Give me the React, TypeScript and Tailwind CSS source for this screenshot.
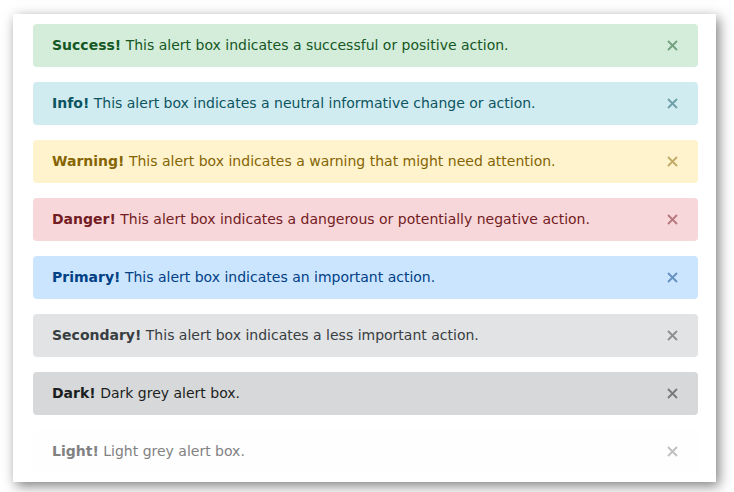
const alerts = [
  { label: 'Success!', text: 'This alert box indicates a successful or positive action.', bg: 'bg-[#d4edda]', fg: 'text-[#155724]' },
  { label: 'Info!', text: 'This alert box indicates a neutral informative change or action.', bg: 'bg-[#d1ecf1]', fg: 'text-[#0c5460]' },
  { label: 'Warning!', text: 'This alert box indicates a warning that might need attention.', bg: 'bg-[#fff3cd]', fg: 'text-[#856404]' },
  { label: 'Danger!', text: 'This alert box indicates a dangerous or potentially negative action.', bg: 'bg-[#f8d7da]', fg: 'text-[#721c24]' },
  { label: 'Primary!', text: 'This alert box indicates an important action.', bg: 'bg-[#cce5ff]', fg: 'text-[#004085]' },
  { label: 'Secondary!', text: 'This alert box indicates a less important action.', bg: 'bg-[#e2e3e5]', fg: 'text-[#383d41]' },
  { label: 'Dark!', text: 'Dark grey alert box.', bg: 'bg-[#d6d8d9]', fg: 'text-[#1b1e21]' },
  { label: 'Light!', text: 'Light grey alert box.', bg: 'bg-[#fefefe]', fg: 'text-[#818182]' },
]

export default function App() {
  return (
    <div className="min-h-screen bg-white pt-[14px] pl-[13px] font-['DejaVu_Sans',Verdana,sans-serif]">
      <div className="w-[703px] h-[468px] bg-white shadow-[3px_4px_12px_rgba(0,0,0,0.5)] pt-[10px] pl-[20px]">
        <div className="flex w-[665px] flex-col gap-[15px]">
          {alerts.map((a) => (
            <div key={a.label} className={`flex h-[43px] items-center justify-between rounded-[4px] pl-[19px] pr-[20px] text-[14px] ${a.bg} ${a.fg}`}>
              <p>
                <strong className="font-bold">{a.label}</strong> {a.text}
              </p>
              <span className="opacity-50">
                <svg width="11" height="11" viewBox="0 0 11 11">
                  <path d="M1 1 L10 10 M10 1 L1 10" stroke="currentColor" strokeWidth="1.8" />
                </svg>
              </span>
            </div>
          ))}
        </div>
      </div>
    </div>
  )
}
